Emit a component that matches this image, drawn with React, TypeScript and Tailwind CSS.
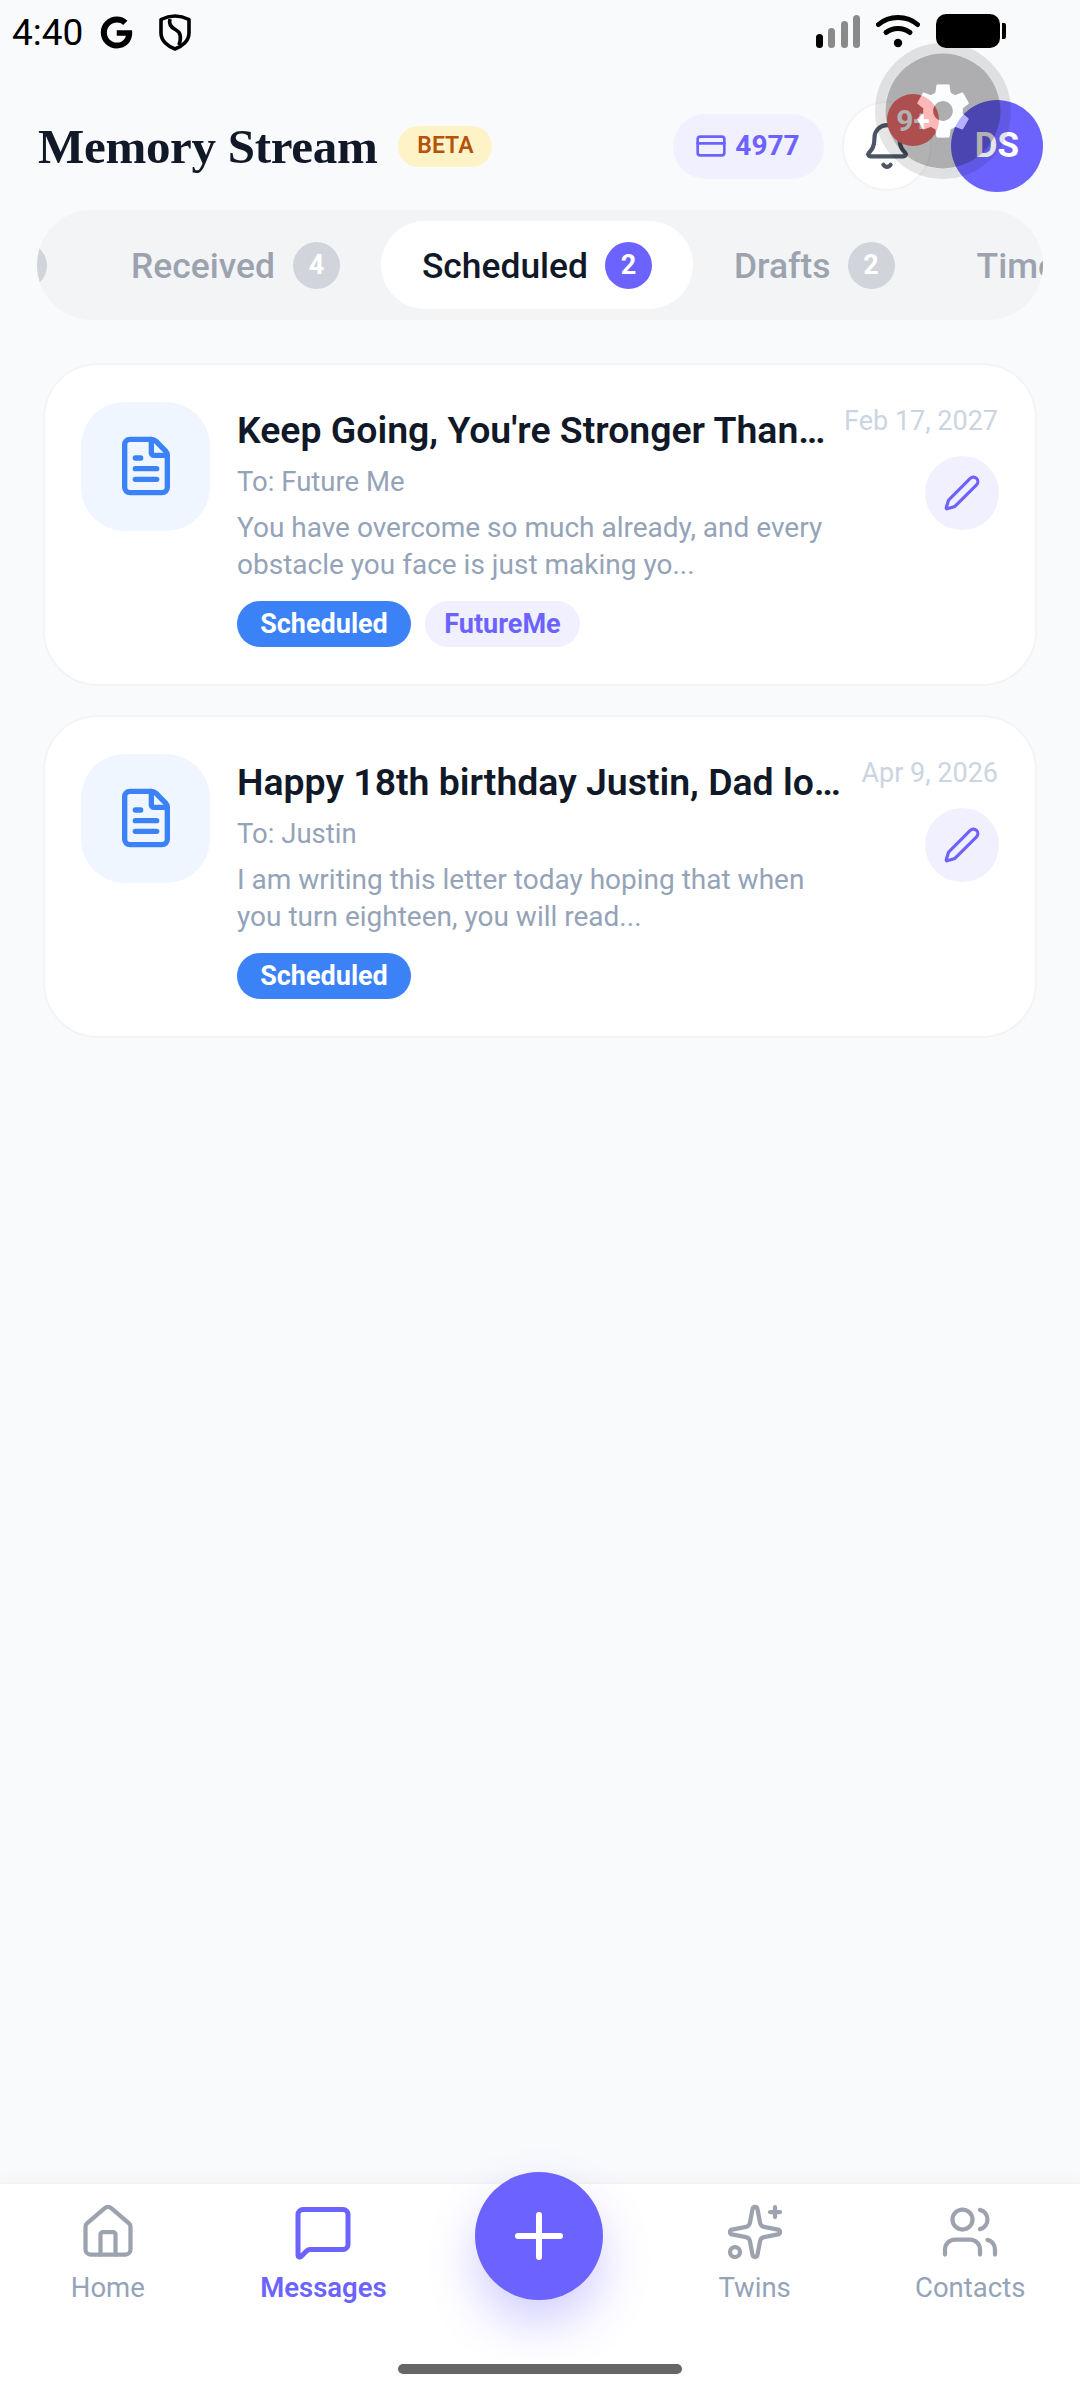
import { Bell, CreditCard, FileText, House, MessageSquare, Pen, Plus, Sparkles, Users } from 'lucide-react';
import { FaGoogle } from 'react-icons/fa';

const GEAR =
  'M19.14 12.94c.04-.3.06-.61.06-.94 0-.32-.02-.64-.07-.94l2.03-1.58c.18-.14.23-.41.12-.61l-1.92-3.32c-.12-.22-.37-.29-.59-.22l-2.39.96c-.5-.38-1.03-.7-1.62-.94l-.36-2.54c-.04-.24-.24-.41-.48-.41h-3.84c-.24 0-.43.17-.47.41l-.36 2.54c-.59.24-1.13.57-1.62.94l-2.39-.96c-.22-.08-.47 0-.59.22L2.74 8.87c-.12.21-.08.47.12.61l2.03 1.58c-.05.3-.09.63-.09.94s.02.64.07.94l-2.03 1.58c-.18.14-.23.41-.12.61l1.92 3.32c.12.22.37.29.59.22l2.39-.96c.5.38 1.03.7 1.62.94l.36 2.54c.05.24.24.41.48.41h3.84c.24 0 .44-.17.47-.41l.36-2.54c.59-.24 1.13-.56 1.62-.94l2.39.96c.22.08.47 0 .59-.22l1.92-3.32c.12-.22.07-.47-.12-.61l-2.01-1.58zM12 15.6c-1.98 0-3.6-1.62-3.6-3.6s1.62-3.6 3.6-3.6 3.6 1.62 3.6 3.6-1.62 3.6-3.6 3.6z';

function StatusBar() {
  return (
    <div className="flex h-[60px] items-start justify-between pl-[12px] pr-[74px] pt-[14px]">
      <div className="flex items-center">
        <span className="text-[37px] leading-[34px] text-black">4:40</span>
        <FaGoogle className="ml-[17px] text-black" size={33} />
        <svg className="ml-[26px]" width="32" height="37" viewBox="0 0 32 37" fill="none" stroke="black" strokeWidth="3.6">
          <path d="M16 2 C21 2 26 3.5 30 5.5 V19 C30 27 23 32.5 16 35 C9 32.5 2 27 2 19 V5.5 C6 3.5 11 2 16 2Z" strokeLinejoin="round" />
          <path d="M11 5 C9 11 13 14 17 16 C21 18 23 22 20 31" />
        </svg>
      </div>
      <div className="flex items-start">
        <div className="flex items-end gap-[5.5px] pt-[1px]">
          <div className="h-[14px] w-[7px] rounded-full bg-black" />
          <div className="h-[20px] w-[7px] rounded-full bg-[#8a8a8a]" />
          <div className="h-[27px] w-[7px] rounded-full bg-[#8a8a8a]" />
          <div className="h-[33px] w-[7px] rounded-full bg-[#8a8a8a]" />
        </div>
        <svg className="ml-[16px]" width="44" height="34" viewBox="0 0 44 34" fill="none" stroke="black" strokeWidth="5" strokeLinecap="round">
          <path d="M2.5 10.5 C13 1 31 1 41.5 10.5" />
          <path d="M10 18.5 C16.5 13 27.5 13 34 18.5" />
          <circle cx="22" cy="29" r="4.2" fill="black" stroke="none" />
        </svg>
        <div className="ml-[16px] h-[34px] w-[64px] rounded-[10px] bg-black" />
        <div className="ml-[2px] mt-[9px] h-[16px] w-[4px] rounded-r-[2px] bg-black" />
      </div>
    </div>
  );
}

function Header() {
  return (
    <div className="mt-[40px] flex h-[92px] items-center pl-[38px] pr-[37px]">
      <h1 className="font-['Liberation_Serif',serif] text-[49px] font-bold leading-none tracking-[-0.3px] text-[#111827]">Memory Stream</h1>
      <div className="ml-[21px] flex h-[41px] w-[94px] items-center justify-center rounded-full bg-[#fef3c7] text-[23px] font-semibold text-[#b45309]">BETA</div>
      <div className="ml-auto flex h-[65px] w-[151px] items-center justify-center gap-[8px] rounded-full bg-[#f1f0ff] pr-[2px] text-[#6c63ff]">
        <CreditCard size={32} strokeWidth={2} />
        <span className="text-[28px] font-bold">4977</span>
      </div>
      <div className="relative ml-[18px] flex h-[90px] w-[90px] items-center justify-center rounded-full border-2 border-[#f3f4f6] bg-white text-[#4b5563]">
        <Bell size={50} strokeWidth={2} />
        <div className="absolute right-[-9px] top-[-9px] flex h-[52px] w-[52px] items-center justify-center rounded-full bg-[#f87171] text-[30px] font-bold text-white">9+</div>
      </div>
      <div className="ml-[19px] flex h-[92px] w-[92px] items-center justify-center rounded-full bg-[#6c63ff] text-[35px] font-bold text-white">DS</div>
    </div>
  );
}

function TabBadge({ n, active }: { n?: number; active?: boolean }) {
  return (
    <span className={`flex h-[47px] w-[47px] items-center justify-center rounded-full text-[27px] font-bold text-white ${active ? 'bg-[#6c63ff]' : 'bg-[#d1d5db]'}`}>
      {n}
    </span>
  );
}

function Tabs() {
  return (
    <div className="mx-[37px] mt-[18px] flex h-[110px] items-center overflow-hidden rounded-full bg-[#f3f4f6]">
      <div className="ml-[-37px] flex flex-none items-center">
        <span className="mr-[43px]"><TabBadge /></span>
        <div className="flex h-[88px] items-center gap-[18px] px-[41px] text-[35.4px] font-medium text-[#9ca3af]">
          <span className="pt-[3px]">Received</span> <TabBadge n={4} />
        </div>
        <div className="flex h-[88px] items-center gap-[17px] rounded-full bg-white px-[41px] text-[35.4px] font-medium text-[#111827]">
          <span className="pt-[3px]">Scheduled</span> <TabBadge n={2} active />
        </div>
        <div className="flex h-[88px] items-center gap-[17px] px-[41px] text-[35.4px] font-medium text-[#9ca3af]">
          <span className="pt-[3px]">Drafts</span> <TabBadge n={2} />
        </div>
        <div className="flex h-[88px] items-center px-[41px] pt-[3px] text-[35.4px] font-medium text-[#9ca3af]">Timeline</div>
      </div>
    </div>
  );
}

type Msg = { title: string; to: string; date: string; lines: string[]; tag?: string };

const messages: Msg[] = [
  {
    title: "Keep Going, You're Stronger Than…",
    to: 'To: Future Me',
    date: 'Feb 17, 2027',
    lines: ['You have overcome so much already, and every', 'obstacle you face is just making yo...'],
    tag: 'FutureMe',
  },
  {
    title: 'Happy 18th birthday Justin, Dad lo…',
    to: 'To: Justin',
    date: 'Apr 9, 2026',
    lines: ['I am writing this letter today hoping that when', 'you turn eighteen, you will read...'],
  },
];

function MessageCard({ msg }: { msg: Msg }) {
  return (
    <div className="flex h-[323px] rounded-[55px] border-2 border-[#f3f4f6] bg-white pl-[36px] pr-[36px] pt-[36px]">
      <div className="mt-[1px] flex h-[129px] w-[129px] flex-none items-center justify-center rounded-[44px] bg-[#eff6ff] pb-[2px] text-[#3b82f6]">
        <FileText size={64} strokeWidth={2} />
      </div>
      <div className="ml-[27px] min-w-0 flex-1">
        <div className="flex items-start justify-between">
          <div className="whitespace-nowrap pt-[4px] text-[37.4px] font-semibold leading-[50px] text-[#111827]">{msg.title}</div>
          <div className="whitespace-nowrap pr-[1px] pt-[1px] text-[27px] leading-[38px] text-[#cbd5e1]">{msg.date}</div>
        </div>
        <div className="flex justify-between">
          <div className="min-w-0">
            <div className="mt-[8px] text-[27.5px] leading-[38px] text-[#94a3b8]">{msg.to}</div>
            <div className="mt-[8px] text-[28px] leading-[37px] text-[#94a3b8]">
              {msg.lines.map((l) => (
                <div key={l} className="whitespace-nowrap">{l}</div>
              ))}
            </div>
            <div className="mt-[18px] flex gap-[14px]">
              <span className="flex h-[46px] w-[174px] items-center justify-center rounded-full bg-[#3b82f6] text-[27px] font-bold text-white">Scheduled</span>
              {msg.tag && (
                <span className="flex h-[46px] w-[155px] items-center justify-center rounded-full bg-[#f1f0ff] text-[27px] font-bold text-[#6c63ff]">{msg.tag}</span>
              )}
            </div>
          </div>
          <div className="mt-[1px] flex h-[74px] w-[74px] flex-none items-center justify-center rounded-full bg-[#f1f0ff] text-[#6c63ff]">
            <Pen size={38} strokeWidth={2} />
          </div>
        </div>
      </div>
    </div>
  );
}

function NavItem({ label, active, children }: { label: string; active?: boolean; children: React.ReactNode }) {
  return (
    <div className={`flex flex-col items-center ${active ? 'text-[#6c63ff]' : 'text-[#9ca3af]'}`}>
      <div className="flex h-[60px] w-[60px] items-center justify-center">{children}</div>
      <span className={`mt-[7px] text-[27.5px] leading-[38px] ${active ? 'font-semibold' : 'text-[#94a3b8]'}`}>{label}</span>
    </div>
  );
}

function BottomNav() {
  return (
    <div className="relative h-[218px] flex-none border-t-2 border-[#f3f4f6] bg-white shadow-[0_-6px_14px_rgba(0,0,0,0.02)]">
      <div className="grid grid-cols-5 pr-[2px] pt-[18px]">
        <NavItem label="Home"><House size={60} strokeWidth={1.7} /></NavItem>
        <NavItem label="Messages" active><MessageSquare size={60} strokeWidth={2} /></NavItem>
        <div className="flex justify-center">
          <div className="mt-[-30px] flex h-[128px] w-[128px] items-center justify-center rounded-full bg-[#6c63ff] text-white shadow-[0_24px_48px_rgba(108,99,255,0.3)]">
            <Plus size={72} strokeWidth={2} />
          </div>
        </div>
        <NavItem label="Twins"><Sparkles size={60} strokeWidth={1.7} /></NavItem>
        <NavItem label="Contacts"><Users size={60} strokeWidth={1.7} /></NavItem>
      </div>
      <div className="absolute bottom-[26px] left-[398px] h-[10px] w-[284px] rounded-full bg-[#666666]" />
    </div>
  );
}

// floating accessibility button that sits over the header
function FloatingGear() {
  return (
    <svg className="absolute left-[875px] top-[43px]" width="136" height="136" viewBox="0 0 136 136">
      <defs>
        <mask id="gear-hole">
          <rect width="136" height="136" fill="white" />
          <g transform="translate(35 35) scale(2.75)">
            <path d={GEAR} fill="black" fillRule="evenodd" />
          </g>
        </mask>
      </defs>
      <circle cx="68" cy="68" r="62.75" fill="none" stroke="black" strokeOpacity="0.1" strokeWidth="10.5" />
      <circle cx="68" cy="68" r="57.5" fill="black" fillOpacity="0.3" mask="url(#gear-hole)" />
      <g transform="translate(35 35) scale(2.75)">
        <path d={GEAR} fill="white" fillOpacity="0.5" fillRule="evenodd" />
      </g>
    </svg>
  );
}

export default function App() {
  return (
    <div className="relative flex h-[2400px] w-[1080px] flex-col overflow-hidden bg-[#f9fafc] font-[Roboto,sans-serif]">
      <StatusBar />
      <Header />
      <Tabs />
      <div className="flex flex-1 flex-col gap-[29px] pl-[43px] pr-[43px] pt-[43px]">
        {messages.map((m) => (
          <MessageCard key={m.title} msg={m} />
        ))}
      </div>
      <BottomNav />
      <FloatingGear />
    </div>
  );
}
